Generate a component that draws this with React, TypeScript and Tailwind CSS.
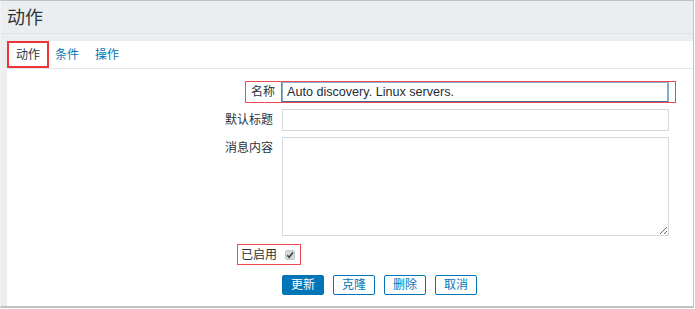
const labelCls = "text-[12px] leading-none text-[#2b3339] whitespace-nowrap";
const btnCls =
  "w-[42px] h-[20px] rounded-[2px] border border-[#0275b8] text-[12px] leading-none flex items-center justify-center";

function Checkbox() {
  return (
    <span className="w-[10px] h-[10px] rounded-[2px] bg-[#d5d8da] border border-[#c3c7ca] flex items-center justify-center">
      <svg width="8" height="8" viewBox="0 0 8 8">
        <path d="M1.2 4.3 L3.1 6.2 L6.9 1.6" fill="none" stroke="#3b3f42" strokeWidth="1.6" />
      </svg>
    </span>
  );
}

export default function App() {
  return (
    <div className="w-[695px] h-[309px] bg-white font-['Liberation_Sans','Noto_Sans_CJK_SC',sans-serif]">
      <div className="w-[694px] h-[308px] border border-[#c2c2c2] border-l-[#f2f2f2] border-b-2 bg-[#ebeef0] flex flex-col">
        {/* page title */}
        <div className="h-[33px] shrink-0 border-b border-[#dde2e5] flex items-center pl-[6px] pt-[2px]">
          <span className="text-[18px] leading-none text-[#30363b]">动作</span>
        </div>

        <div className="flex-1 ml-[6px] mt-[7px] bg-white flex flex-col">
          {/* tabs */}
          <div className="h-[28px] shrink-0 border-b border-[#e6e9eb] flex items-stretch text-[12px]">
            <div className="w-[42px] border-2 border-[#ee3338] flex items-center justify-center text-[#2b3339]">
              动作
            </div>
            <div className="ml-[6px] flex items-center text-[#0275b8]">条件</div>
            <div className="ml-[16px] flex items-center text-[#0275b8]">操作</div>
          </div>

          {/* form */}
          <div className="pt-[12px] flex flex-col">
            <div className="flex items-stretch h-[22px]">
              <div className="w-[238px]" />
              <div className="w-[36px] border border-r-0 border-[#ee4a4f] flex items-center pl-[5px]">
                <span className={labelCls}>名称</span>
              </div>
              <div className="w-[395px] border border-[#ee4a4f] flex items-start">
                <div className="w-[387px] h-[20px] border border-[#86b1cf] border-b-[#3f6e92] border-r-2 border-r-[#7fb0d2] flex items-center pl-[4px] text-[12.6px] text-[#1f2c33]">
                  Auto discovery. Linux servers.
                </div>
              </div>
            </div>

            <div className="flex items-center mt-[6px] h-[22px]">
              <div className="w-[266px] flex justify-end">
                <span className={labelCls}>默认标题</span>
              </div>
              <div className="ml-[9px] w-[387px] h-[22px] border-[1.5px] border-[#d3d9de]" />
            </div>

            <div className="flex items-start mt-[6px]">
              <div className="w-[266px] flex justify-end pt-[5px]">
                <span className={labelCls}>消息内容</span>
              </div>
              <textarea
                readOnly
                className="ml-[9px] w-[387px] h-[99px] border-[1.5px] border-[#d3d9de] outline-none resize"
              />
            </div>

            <div className="flex items-center mt-[8px]">
              <div className="ml-[230px] w-[64px] h-[21px] border border-[#ee4a4f] flex items-center pl-[3px]">
                <span className={labelCls}>已启用</span>
                <span className="ml-[8px]">
                  <Checkbox />
                </span>
              </div>
            </div>

            <div className="flex items-center gap-[9px] mt-[10px] ml-[275px]">
              <button className={`${btnCls} bg-[#0275b8] text-white`}>更新</button>
              <button className={`${btnCls} bg-white text-[#0275b8]`}>克隆</button>
              <button className={`${btnCls} bg-white text-[#0275b8]`}>删除</button>
              <button className={`${btnCls} bg-white text-[#0275b8]`}>取消</button>
            </div>
          </div>
        </div>
      </div>
    </div>
  );
}
